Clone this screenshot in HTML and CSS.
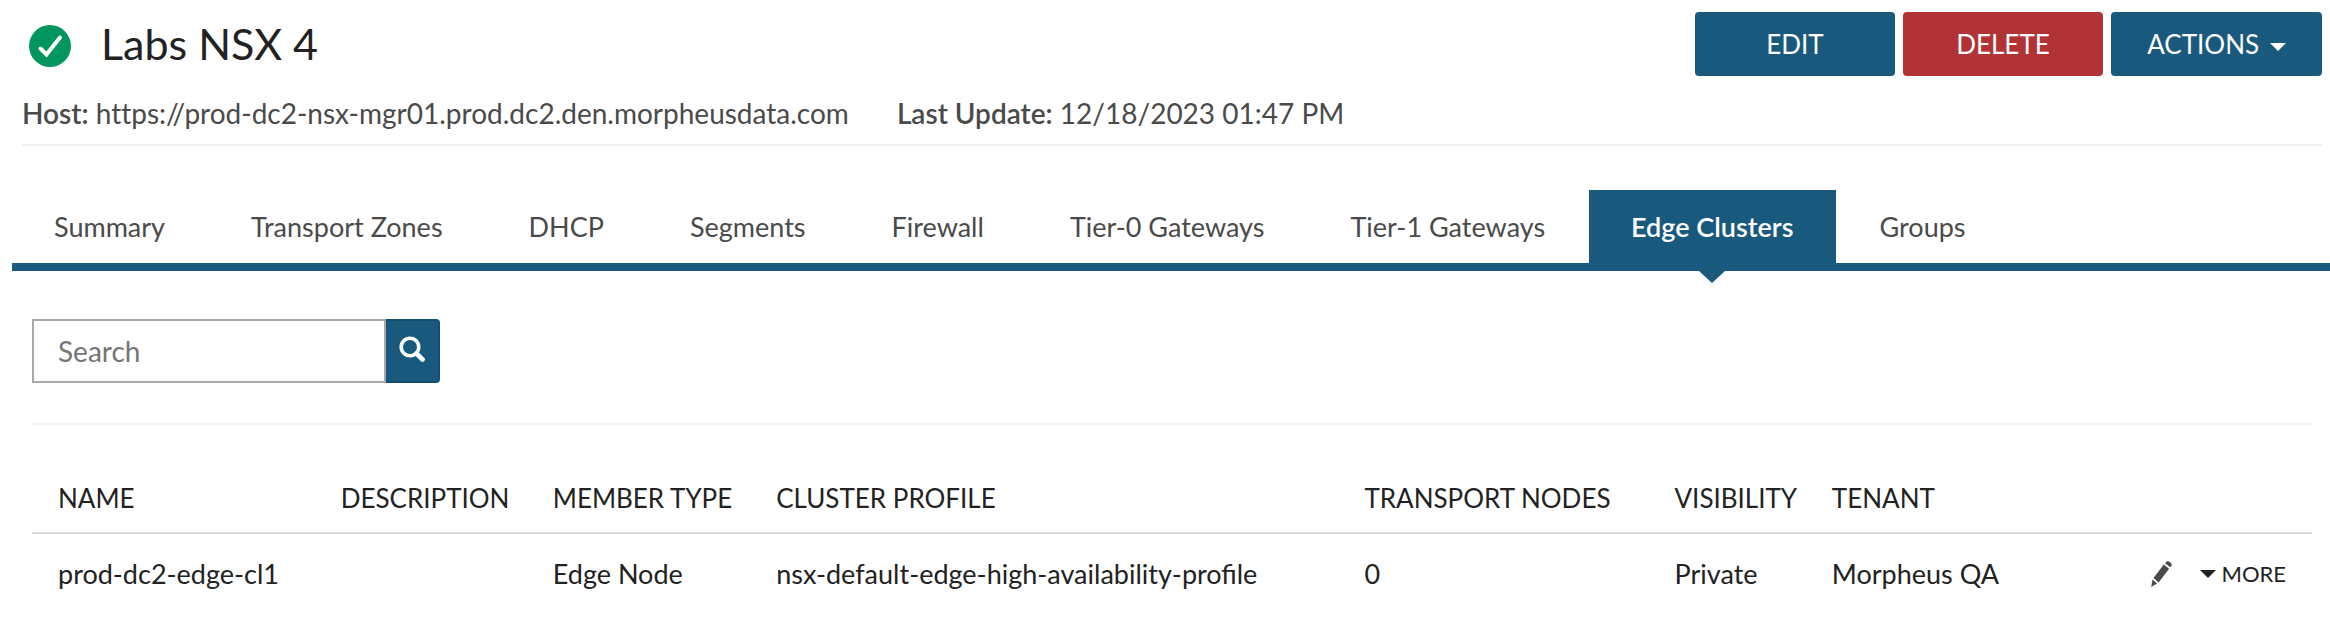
FILE: index.html
```html
<!DOCTYPE html>
<html lang="en">
<head>
<meta charset="utf-8">
<title>Labs NSX 4</title>
<link rel="stylesheet" href="styles.css">
</head>
<body>
<header class="page-header">
  <div class="title-row">
    <svg class="status-icon" viewBox="0 0 42 42" role="img" aria-label="OK"><circle cx="21" cy="21" r="21" fill="#00965e"/><path d="M11.5 23.5l6 6L31 12.5" fill="none" stroke="#fff" stroke-width="4" stroke-linecap="round"/></svg>
    <h1 class="title">Labs NSX 4</h1>
    <div class="actions">
      <button class="btn" type="button">EDIT</button>
      <button class="btn btn-danger" type="button">DELETE</button>
      <button class="btn btn-menu" type="button">ACTIONS <span class="caret"></span></button>
    </div>
  </div>
  <div class="meta">
    <span><b class="meta-label">Host:</b> https://prod-dc2-nsx-mgr01.prod.dc2.den.morpheusdata.com</span>
    <span><b class="meta-label">Last Update:</b> 12/18/2023 01:47 PM</span>
  </div>
</header>
<nav class="tabs">
  <a class="tab" href="#summary">Summary</a>
  <a class="tab" href="#zones">Transport Zones</a>
  <a class="tab" href="#dhcp">DHCP</a>
  <a class="tab" href="#segments">Segments</a>
  <a class="tab" href="#firewall">Firewall</a>
  <a class="tab" href="#tier0">Tier-0 Gateways</a>
  <a class="tab" href="#tier1">Tier-1 Gateways</a>
  <a class="tab tab-active" href="#edge" aria-current="page">Edge Clusters</a>
  <a class="tab" href="#groups">Groups</a>
</nav>
<main class="content">
  <form class="search">
    <input class="search-input" type="text" placeholder="Search" aria-label="Search">
    <button class="search-btn" type="button" aria-label="Run search"><svg class="search-icon" viewBox="0 0 26 26"><circle cx="11" cy="11" r="8.8" fill="none" stroke="#fff" stroke-width="3.6"/><path d="M17.5 17.5l6 6" stroke="#fff" stroke-width="4.6" stroke-linecap="round"/></svg></button>
  </form>
  <table class="grid">
    <colgroup><col class="c-name"><col class="c-desc"><col class="c-type"><col class="c-profile"><col class="c-nodes"><col class="c-vis"><col class="c-tenant"><col></colgroup>
    <thead>
      <tr><th>NAME</th><th>DESCRIPTION</th><th>MEMBER TYPE</th><th>CLUSTER PROFILE</th><th>TRANSPORT NODES</th><th>VISIBILITY</th><th>TENANT</th><th></th></tr>
    </thead>
    <tbody>
      <tr><td>prod-dc2-edge-cl1</td><td></td><td>Edge Node</td><td>nsx-default-edge-high-availability-profile</td><td>0</td><td>Private</td><td>Morpheus QA</td>
      <td><div class="row-actions">
        <button class="icon-btn" type="button" aria-label="Edit row"><svg class="pencil" viewBox="0 0 21 26" fill="#4a4a4a"><path d="M14 2.2L16 .3q1-.6 2 .2l2 1.7q1 .8.6 2l-1.3 2.1z"/><path d="M12.8 3.6l5.3 4.2L7.6 21.4 2.5 17z"/><path d="M1.5 18.5l4.6 3.9L.2 26z"/></svg></button>
        <button class="more" type="button"><span class="caret"></span>MORE</button>
      </div></td></tr>
    </tbody>
  </table>
</main>
</body>
</html>
```
FILE: styles.css
```css
* { box-sizing: border-box; }
body {
  margin: 0;
  background: #fff;
  color: #222;
  font-family: Lato, "Open Sans", sans-serif;
  font-size: 26px;
  line-height: 36px;
}
button { font: inherit; border: 0; cursor: pointer; }
.page-header {
  margin: 0 8px 0 22px;
  padding: 12px 0 14px;
  border-bottom: 2px solid #f0f0f0;
}
.title-row { display: flex; align-items: center; }
.status-icon { width: 42px; height: 42px; margin: 4px 30px 0 7px; }
.title { margin: 0; font-size: 43px; line-height: 64px; font-weight: 400; }
.actions { display: flex; margin-left: auto; gap: 8px; }
.btn {
  width: 200px;
  height: 64px;
  border-radius: 4px;
  background: #19597d;
  color: #fff;
}
.btn-danger { background: #b13336; }
.btn-menu { width: 211px; }
.caret {
  display: inline-block;
  margin-left: 4px;
  border: 8px solid transparent;
  border-top-color: currentColor;
  border-bottom: 0;
  vertical-align: middle;
}
.meta {
  display: flex;
  gap: 48px;
  margin-top: 20px;
  font-size: 28px;
  line-height: 34px;
  color: #4a4a4a;
  font-variant-ligatures: none;
}
.meta-label { font-weight: 600; }
.tabs {
  display: flex;
  gap: 2px;
  margin: 44px 0 0 12px;
  border-bottom: 8px solid #19597d;
  font-size: 27px;
}
.tab {
  position: relative;
  padding: 19px 42px 18px;
  color: #4a4a4a;
  text-decoration: none;
}
.tab-active { background: #19597d; color: #fff; font-weight: 600; }
.tab-active::after {
  content: "";
  position: absolute;
  top: calc(100% + 8px);
  left: calc(50% - 13px);
  border: 13px solid transparent;
  border-top: 12px solid #19597d;
  border-bottom: 0;
}
.content { margin: 48px 18px 0 32px; }
.search { display: flex; padding-bottom: 40px; border-bottom: 2px solid #f2f2f2; }
.search-input {
  width: 354px;
  height: 64px;
  padding: 0 24px;
  border: 2px solid #a9a9a9;
  border-radius: 0;
  font: inherit;
  font-size: 28px;
}
.search-input::placeholder { color: #757575; opacity: 1; }
.search-btn {
  display: grid;
  place-items: center;
  width: 54px;
  padding: 0 0 4px;
  border: 2px solid #164e6e;
  border-left: 0;
  border-radius: 0 4px 4px 0;
  background: #19597d;
}
.search-icon { width: 26px; height: 26px; }
.grid { width: 100%; margin-top: 37px; border-collapse: collapse; table-layout: fixed; }
.c-name { width: 12.4%; }
.c-desc { width: 9.3%; }
.c-type { width: 9.8%; }
.c-profile { width: 25.8%; }
.c-nodes { width: 13.6%; }
.c-vis { width: 6.9%; }
.c-tenant { width: 14%; }
th, td { padding: 18px 0 16px 26px; text-align: left; font-weight: 400; white-space: nowrap; }
th { border-bottom: 2px solid #ddd; }
td { padding-top: 22px; font-size: 27px; }
.row-actions { display: flex; justify-content: flex-end; align-items: center; gap: 28px; padding-right: 26px; }
.icon-btn, .more { padding: 0; background: none; color: inherit; }
.icon-btn { display: flex; }
.pencil { width: 21px; height: 26px; }
.more { display: flex; align-items: center; gap: 5px; font-size: 22px; }
.more .caret { margin: 0; }
```
